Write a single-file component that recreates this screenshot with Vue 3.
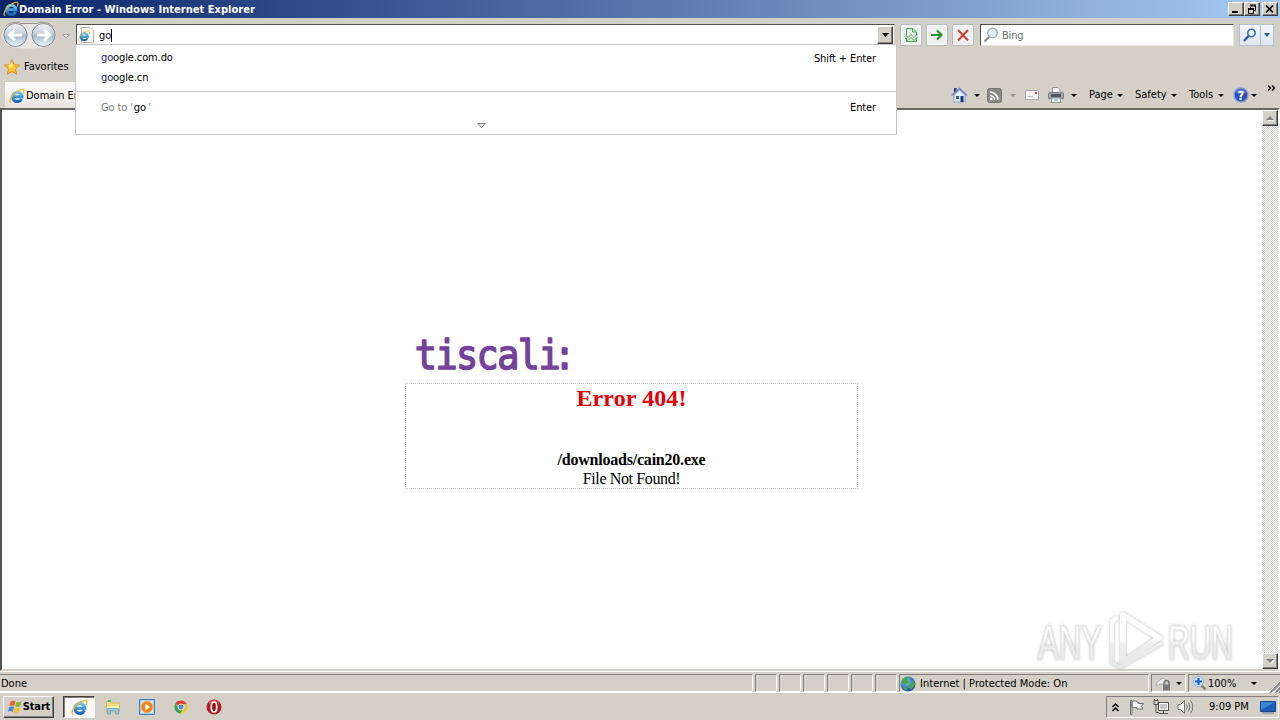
<script setup>
import { ref } from 'vue';

const address = ref('go');

const suggestions = ref([
  { id: 1, match: 'go', rest: 'ogle.com.do', hint: 'Shift + Enter' },
  { id: 2, match: 'go', rest: 'ogle.cn', hint: '' },
]);

const menus = ref(['Page', 'Safety', 'Tools']);
</script>

<template>
  <div class="screen">
    <!-- shared icons -->
    <svg class="defs" width="0" height="0">
      <defs>
        <linearGradient id="ieBlue" x1="0" y1="0" x2="0" y2="1">
          <stop offset="0" stop-color="#6cc8f4" />
          <stop offset="1" stop-color="#1565b8" />
        </linearGradient>
        <linearGradient id="navFill" x1="0" y1="0" x2="0" y2="1">
          <stop offset="0" stop-color="#f4f6f8" />
          <stop offset="0.48" stop-color="#c3ccd6" />
          <stop offset="0.55" stop-color="#a9bccd" />
          <stop offset="1" stop-color="#eefaff" />
        </linearGradient>
        <radialGradient id="globeFill" cx="0.4" cy="0.35" r="0.7">
          <stop offset="0" stop-color="#7fd0f5" />
          <stop offset="1" stop-color="#0d3f96" />
        </radialGradient>
        <linearGradient id="markFill" gradientUnits="userSpaceOnUse" x1="0" y1="8" x2="0" y2="64">
          <stop offset="0.5" stop-color="#fff" />
          <stop offset="0.62" stop-color="#ededed" />
          <stop offset="1" stop-color="#e8e8e8" />
        </linearGradient>
        <symbol id="ie" viewBox="0 0 16 16">
          <path d="M12.600 10.800A4.700 4.700 0 1 1 13 8.700H4.200" fill="none" stroke="url(#ieBlue)" stroke-width="3" />
          <path d="M2.200 14.600C-.6 13.500 2 8.400 6.200 4.800C10 1.600 14.400 .2 15 2.200C15.300 3.200 14.700 4.500 14 5.500" fill="none" stroke="#efb52a" stroke-width="1.200" />
        </symbol>
      </defs>
    </svg>

    <div class="title-bar">
      <svg class="ie-title" width="16" height="16"><use href="#ie" /></svg>
      <span class="title">Domain Error - Windows Internet Explorer</span>
      <div class="win-buttons">
        <button><svg width="12" height="10"><path d="M2 8h6" stroke="#000" stroke-width="2" /></svg></button>
        <button class="restore"><svg width="12" height="10"><path d="M4 1h6M4 2h6M4.500 3v1M9.500 2v4.500H8M2 4.500h6M2 5.500h6M2.500 5v4.500h5V5" fill="none" stroke="#000" /></svg></button>
        <button><svg width="12" height="10"><path d="M2 1.500l7 7M9 1.500l-7 7" stroke="#000" stroke-width="1.700" /></svg></button>
      </div>
    </div>

    <div class="nav-bar">
      <svg class="nav-arrows" width="74" height="32" viewBox="0 0 74 32">
        <path d="M15 4.500H43A12 12 0 0 1 43 29.500C37 31 21 31 15 29.500A12 12 0 0 1 15 4.500Z" fill="#e7e6e5" />
        <path d="M6 8C12 3 18 4 21 5.500H37C42 3 49 4 53 9" fill="none" stroke="#96928e" />
        <g stroke="#7d8792">
          <circle cx="15.500" cy="17" r="11.500" fill="url(#navFill)" />
          <circle cx="43.500" cy="17" r="11.500" fill="url(#navFill)" />
        </g>
        <path d="M22 17H10M15 11.500L9.500 17L15 22.500" fill="none" stroke="#fff" stroke-width="3" />
        <path d="M37 17H49M44 11.500L49.500 17L44 22.500" fill="none" stroke="#fff" stroke-width="3" />
        <path d="M62.500 16.500h7l-3.500 3.500z" fill="#e4e0da" stroke="#aaa59e" />
      </svg>
      <div class="address">
        <svg width="16" height="16" viewBox="0 0 16 16">
          <path d="M3.500 .5H12L15.500 4V15.500H3.500Z" fill="#fffef7" stroke="#b7b5a8" />
          <use href="#ie" x="0" y="3" width="12" height="12" />
        </svg>
        <span class="typed">{{ address }}</span>
        <span class="caret"></span>
        <button class="drop"><svg width="7" height="4"><path d="M0 0h7L3.500 4z" /></svg></button>
      </div>
      <div class="tool-buttons">
        <button>
          <svg width="16" height="16" viewBox="0 0 16 16" fill="none" stroke="#3fa545">
            <path d="M3.500 8V1.500H10L13.500 5V8M9.500 1.500V5H13M3.500 11V14.500H13.500V11" />
            <path d="M2 7.500L5 10.500L8 7.500L11 10.500L14.500 7M2 11L5 13.500L8 10.500L11 13.500L14.500 10" />
          </svg>
        </button>
        <button>
          <svg width="16" height="16" viewBox="0 0 16 16"><path d="M2 8H12M8 3.500L12.500 8L8 12.500" fill="none" stroke="#25942c" stroke-width="2.200" /></svg>
        </button>
        <button>
          <svg width="16" height="16" viewBox="0 0 16 16"><path d="M3 3L13 13.500M13 3L3 13.500" stroke="#cf3f3b" stroke-width="2" /></svg>
        </button>
      </div>
      <div class="search">
        <svg width="16" height="16" viewBox="0 0 16 16">
          <path d="M1.500 14.500L6 10" stroke="#8b8b8b" stroke-width="2.200" />
          <circle cx="9.500" cy="6" r="4.800" fill="#dceefa" stroke="#9aa5b0" stroke-width="1.300" />
        </svg>
        <span>Bing</span>
      </div>
      <div class="search-go">
        <span class="go"><svg width="14" height="14" viewBox="0 0 14 14"><path d="M1 13L5.500 8" stroke="#2257b4" stroke-width="2.200" /><circle cx="8.500" cy="5" r="3.700" fill="#eff7ff" stroke="#2f6bc8" stroke-width="1.600" /></svg></span>
        <span class="more"><svg width="6" height="4"><path d="M0 0h6L3 4z" fill="#24589f" /></svg></span>
      </div>
    </div>

    <div class="fav-bar">
      <svg width="16" height="16" viewBox="0 0 16 16">
        <path d="M8 .7L10.200 5.700L15.500 6.200L11.500 9.800L12.700 15.200L8 12.400L3.300 15.200L4.500 9.800L.5 6.200L5.800 5.700Z" fill="#fec534" stroke="#dd8a16" />
        <path d="M8 3L9.300 6.600L7 9L4 7Z" fill="#ffe88c" />
      </svg>
      <span>Favorites</span>
    </div>

    <div class="command-bar">
      <div class="tab">
        <svg width="16" height="16"><use href="#ie" /></svg>
        <span>Domain Er</span>
      </div>
      <div class="commands">
        <svg class="home" width="16" height="16" viewBox="0 0 16 16">
          <path d="M3 1h2.500v5H3z" fill="#2c3790" />
          <path d="M3 8L8.500 3L14 8V15H3Z" fill="#e4effc" stroke="#8aa0c8" />
          <path d="M.7 8.500L8.500 1.500L15.700 8.500" fill="none" stroke="#6f86bd" stroke-width="1.500" />
          <path d="M5 9h3v3H5z" fill="#31649c" /><path d="M9.500 9h3v6h-3z" fill="#1d3479" />
        </svg>
        <i class="arrow"></i>
        <svg class="rss" width="15" height="15" viewBox="0 0 15 15">
          <rect x=".5" y=".5" width="14" height="14" rx="2" fill="#8b8986" stroke="#787572" />
          <path d="M3 4A8 8 0 0 1 11 12M3 7.500A4.500 4.500 0 0 1 7.500 12" fill="none" stroke="#fff" stroke-width="1.600" />
          <circle cx="4.200" cy="10.900" r="1.300" fill="#fff" />
        </svg>
        <i class="arrow dim"></i>
        <svg class="mail" width="14" height="10" viewBox="0 0 14 10"><path d="M.5 .5h13v9H.5z" fill="#f8f7fa" stroke="#aaa5ad" /><path d="M10 2h2v2h-2z" fill="#d33b45" /><path d="M3 6.500h5" stroke="#b9b5bd" /></svg>
        <svg class="printer" width="16" height="16" viewBox="0 0 16 16">
          <path d="M4.500 6V.5H10L12 2.500V6" fill="#fff" stroke="#8a929c" />
          <path d="M1.500 5.500h13q1 0 1 1v5H.5v-5q0-1 1-1z" fill="#a3a5a8" stroke="#7b7e82" />
          <path d="M3 7h10v3H3z" fill="#515459" />
          <path d="M4 11h8l1 4.500H3z" fill="#f5faff" stroke="#8a929c" />
          <path d="M6 13h4" stroke="#4d90c8" />
        </svg>
        <i class="arrow"></i>
        <span v-for="menu in menus" :key="menu" class="menu" :class="'menu-' + menu.toLowerCase()">{{ menu }}<i class="arrow"></i></span>
        <svg class="help" width="16" height="16" viewBox="0 0 16 16">
          <circle cx="8" cy="8" r="7" fill="#2c52b8" stroke="#8b9cc7" stroke-width="1.500" />
          <path d="M3 5Q8 0 13 5Q8 8 3 5" fill="#6f92dc" />
          <text x="8" y="12.500" text-anchor="middle" fill="#fff" font-size="12" font-weight="bold">?</text>
        </svg>
        <i class="arrow"></i>
        <svg class="chevrons" width="9" height="6" viewBox="0 0 9 6"><path d="M1 .5L3.500 3L1 5.500M5 .5L7.500 3L5 5.500" fill="none" stroke="#000" stroke-width="1.300" /></svg>
      </div>
    </div>

    <div class="viewport">
      <div class="page">
        <div class="message">
          <svg class="logo" width="190" height="46" viewBox="0 0 190 46">
            <text x="6.500" y="38" transform="scale(0.9 1)">tiscali<tspan dx="-6">:</tspan></text>
          </svg>
          <div class="error-box">
            <h2>Error 404!</h2>
            <b>/downloads/cain20.exe</b>
            <span>File Not Found!</span>
          </div>
        </div>
        <svg class="watermark" width="216" height="76" viewBox="0 0 216 76">
          <g class="mark">
            <text x="4" y="57" textLength="64" lengthAdjust="spacingAndGlyphs">ANY</text>
            <text x="134" y="57" textLength="65" lengthAdjust="spacingAndGlyphs">RUN</text>
            <path class="ring" d="M89 13L125 36L89 60Z" />
            <path class="bar" d="M84 15L78 19V61L86 65L128 41" />
          </g>
        </svg>
      </div>
      <div class="scrollbar">
        <button><svg width="8" height="5"><path d="M1 5h8L5 1z" fill="#fff" /><path d="M0 4h8L4 0z" fill="#808080" /></svg></button>
        <button><svg width="8" height="5"><path d="M1 1h8L5 5z" fill="#fff" /><path d="M0 0h8L4 4z" fill="#808080" /></svg></button>
      </div>
    </div>

    <div class="status-bar">
      <div class="panel done">Done</div>
      <div v-for="n in 6" :key="n" class="panel small"></div>
      <div class="panel zone">
        <svg width="16" height="16" viewBox="0 0 16 16">
          <circle cx="8" cy="8" r="7.500" fill="url(#globeFill)" />
          <path d="M2 4Q5 0 9 1L7 4L9 6L5 9L3 8ZM10 7L14 5L15 9L11 14L9 11ZM3 11L7 12L6 15Z" fill="#4ca64b" />
        </svg>
        <span>Internet | Protected Mode: On</span>
      </div>
      <div class="panel lock">
        <svg width="17" height="16" viewBox="0 0 17 16">
          <path d="M1 10C1 5 6 4 8 2C10 4 12 5 10 8L5 8Z" fill="#eee" stroke="#aaa" />
          <path d="M9 9V7A2.500 2.500 0 0 1 14 7V9" fill="none" stroke="#777" stroke-width="1.400" />
          <path d="M8 8.500h7v6H8z" fill="#77777b" />
        </svg>
        <i class="arrow"></i>
      </div>
      <div class="panel zoom">
        <svg width="14" height="15" viewBox="0 0 14 15">
          <path d="M8 9L12.500 13.500" stroke="#8d8277" stroke-width="2.500" />
          <circle cx="5.500" cy="5.500" r="5" fill="#d0e6fb" stroke="#8fb3dc" />
          <path d="M5.500 2V9M2 5.500H9" stroke="#1e62c8" stroke-width="2.200" />
        </svg>
        <span>100%</span>
        <i class="arrow"></i>
        <svg class="grip" width="13" height="13" viewBox="0 0 13 13"><path d="M1 13L13 1M6 13L13 6M10 13L13 10" stroke="#808080" stroke-width="1.600" /><path d="M0 12L12 0M5 12L13 4" stroke="#fff" /></svg>
      </div>
    </div>

    <div class="taskbar">
      <button class="start">
        <svg width="16" height="16" viewBox="0 0 17 16">
          <path d="M4 2Q6.500 .5 9 2L7.700 7Q5 5.700 2.600 7Z" fill="#e8602c" />
          <path d="M10 2.300Q13 3.600 15.500 2L14 7.200Q11 8.500 8.700 7.400Z" fill="#7fb83c" />
          <path d="M2.300 8Q5 6.700 7.400 8L6 13Q3.500 11.700 1 13Z" fill="#3f86d2" />
          <path d="M8.400 8.400Q11 9.700 13.700 8.300L12.300 13.300Q9.500 14.700 7 13.400Z" fill="#f6bd28" />
        </svg>
        <span>Start</span>
      </button>
      <div class="task-ie"><svg width="17" height="17"><use href="#ie" /></svg></div>
      <div class="quick">
        <svg width="16" height="16" viewBox="0 0 16 16">
          <path d="M1.500 2.500H6L7 4H14.500V13H1.500Z" fill="#f5dc82" stroke="#d9b75a" />
          <path d="M3 1h3v2H3z" fill="#5bb36a" />
          <path d="M2 7h12v2H2z" fill="#fff2bd" />
          <path d="M2.500 15V9.500h11V15h-3v-3h-5v3z" fill="#8fc8e8" stroke="#5b9fc8" stroke-width=".7" />
        </svg>
        <svg width="16" height="16" viewBox="0 0 16 16">
          <path d="M.5 .5h15v15H.5z" fill="#a6cbea" stroke="#4581bb" />
          <path d="M2 2h12v12H2z" fill="#d5e8f7" />
          <circle cx="8" cy="8" r="5.800" fill="#f08418" stroke="#f8b05c" />
          <path d="M6.300 4.500L11 8L6.300 11.500Z" fill="#fff" />
        </svg>
        <svg width="14" height="14" viewBox="0 0 14 14">
          <circle cx="7" cy="7" r="6.500" fill="#f3c42c" />
          <path d="M7 7L1.300 3.800A6.500 6.500 0 0 1 12.700 4H7Z" fill="#dc4132" />
          <path d="M1.300 3.800A6.500 6.500 0 0 0 6.500 13.500L9 8.500L5 8.500Z" fill="#37a156" />
          <circle cx="7" cy="7" r="3" fill="#4b88e0" stroke="#fff" stroke-width=".9" />
        </svg>
        <svg width="16" height="16" viewBox="0 0 16 16">
          <circle cx="8" cy="8" r="7.500" fill="#b71a20" />
          <path d="M2 4Q8-2 14 4Q8 6 2 4" fill="#d94e4e" />
          <ellipse cx="8" cy="8" rx="2.700" ry="5" fill="#8c0c12" stroke="#fff" stroke-width="1.700" />
        </svg>
      </div>
      <div class="tray">
        <svg class="expand" width="7" height="9" viewBox="0 0 7 9"><path d="M.5 4L3.500 1L6.500 4M.5 8L3.500 5L6.500 8" fill="none" stroke="#000" stroke-width="1.400" /></svg>
        <svg class="flag" width="16" height="16" viewBox="0 0 16 16"><path d="M1.500 15.500V1.500H3V15.500ZM3 2.500Q6 1 9 3V4.500H14.500L12.500 7.500L14 10H8V9Q5.500 7.500 3 9Z" fill="#fff" stroke="#6d6d6d" /></svg>
        <svg class="network" width="16" height="16" viewBox="0 0 16 16"><path d="M5.500 3.500H15.500V11.500H5.500Z" fill="#c8c8c8" stroke="#555" /><path d="M10.500 12V14M6 14.500H15M1 1.500H5V5.500H1ZM3 5.500V13.500H6M1.500 0V2M4.500 0V2" fill="none" stroke="#555" /><path d="M6.500 4.500h8v6h-8z" fill="none" stroke="#fff" /></svg>
        <svg class="volume" width="17" height="16" viewBox="0 0 17 16"><path d="M1 5.500H3.500L7.500 1.500V14.500L3.500 10.500H1Z" fill="#fff" stroke="#777" /><path d="M9.500 5.500Q11 8 9.500 10.500M11.500 3.500Q14.300 8 11.500 12.500M13.500 1.500Q18 8 13.500 14.500" fill="none" stroke="#777" /></svg>
        <span class="clock">9:09 PM</span>
        <svg class="desktop" width="16" height="13" viewBox="0 0 16 13"><path d="M.5 .5h15v10H.5z" fill="#1c5db9" stroke="#194684" /><path d="M1 1h14L1 9z" fill="#3d83d7" /><path d="M2 12h12" stroke="#5c7494" /></svg>
      </div>
    </div>

    <!-- address bar suggestions, opened over the page -->
    <div class="suggest">
      <div v-for="item in suggestions" :key="item.id" class="suggest-row">
        <span><em>{{ item.match }}</em>{{ item.rest }}</span>
        <span class="hint">{{ item.hint }}</span>
      </div>
      <div class="suggest-row goto">
        <span class="muted">Go to '<b>{{ address }}</b>'</span>
        <span class="enter">Enter</span>
      </div>
      <svg class="expander" width="9" height="6"><path d="M.8 .5h7.400L4.500 4.500z" fill="#eee" stroke="#888" /></svg>
    </div>
  </div>
</template>

<style>
body {
  margin: 0;
  overflow: hidden;
}
</style>

<style scoped>
.screen {
  position: relative;
  display: flex;
  flex-direction: column;
  width: 1280px;
  height: 720px;
  background: #d4d0c8;
  color: #000;
  font-family: Tahoma, "DejaVu Sans Condensed", "DejaVu Sans", sans-serif;
  font-stretch: condensed;
  font-size: 11px;
  letter-spacing: 0;
  line-height: 14px;
  white-space: nowrap;
  overflow: hidden;
}

.screen * {
  box-sizing: border-box;
}

svg {
  display: block;
  flex: none;
}

.defs {
  position: absolute;
}

button {
  display: flex;
  align-items: center;
  justify-content: center;
  padding: 0;
  background: #d4d0c8;
  border: 1px solid;
  border-color: #fff #404040 #404040 #fff;
  box-shadow: inset -1px -1px #808080;
  font: inherit;
  letter-spacing: inherit;
}

.arrow {
  display: inline-block;
  flex: none;
  border: 3px solid transparent;
  border-top-color: #000;
  border-bottom: 0;
}

.arrow.dim {
  border-top-color: #96928d;
}

/* title bar */
.title-bar {
  display: flex;
  align-items: center;
  height: 18px;
  padding: 0 2px 0 3px;
  background: linear-gradient(to right, #0a246a, #a6caf0);
}

.title {
  flex: 1;
  padding-top: 1px;
  color: #fff;
  font-weight: bold;
  letter-spacing: 0.03px;
}

.win-buttons {
  display: flex;
}

.win-buttons button {
  width: 16px;
  height: 14px;
}

.win-buttons .restore {
  margin-right: 2px;
}

/* address row */
.nav-bar {
  display: flex;
  height: 33px;
}

.nav-arrows {
  margin: 0 2px 0 0;
}

.address {
  display: flex;
  align-items: center;
  width: 819px;
  height: 22px;
  margin-top: 6px;
  padding-left: 1px;
  background: #fff;
  border: 1px solid;
  border-color: #55524e #d4d0c8 #d4d0c8 #55524e;
}

.typed {
  margin-left: 5px;
  padding-top: 2px;
}

.caret {
  width: 1px;
  height: 13px;
  background: #000;
}

.drop {
  width: 16px;
  height: 18px;
  margin: 0 1px 0 auto;
}

.tool-buttons {
  display: flex;
  gap: 4px;
  margin: 6px 0 0 5px;
}

.tool-buttons button {
  width: 22px;
  height: 22px;
  background: #eff0f0;
  border: 1px solid #b5bac0;
  border-radius: 2px;
  box-shadow: inset 0 0 0 1px #fafbfc;
}

.search {
  display: flex;
  align-items: center;
  width: 254px;
  height: 22px;
  margin: 6px 0 0 6px;
  padding-left: 2px;
  background: #fff;
  border: 1px solid;
  border-color: #55524e #e8e5e0 #e8e5e0 #55524e;
  color: #6d6d6d;
}

.search span {
  margin: 2px 0 0 3px;
  letter-spacing: -0.2px;
}

.search-go {
  display: flex;
  width: 35px;
  height: 22px;
  margin: 6px 0 0 5px;
  background: linear-gradient(#f4f7fc, #dde5f0);
  border: 1px solid #b5bfd0;
}

.search-go span {
  display: flex;
  align-items: center;
  justify-content: center;
}

.go {
  width: 21px;
  border-right: 1px solid #b5bfd0;
}

.more {
  width: 12px;
}

/* favorites */
.fav-bar {
  display: flex;
  align-items: center;
  gap: 4px;
  height: 31px;
  padding-left: 4px;
}

/* tabs and commands */
.command-bar {
  display: flex;
  height: 26px;
}

.tab {
  display: flex;
  align-items: center;
  gap: 1px;
  width: 160px;
  padding: 2px 0 0 4px;
  margin-left: 5px;
  background: linear-gradient(#fdfcfb, #e6e3de);
}

.commands {
  display: flex;
  align-items: center;
  flex: 1;
  padding-left: 786px;
}

.home {
  margin-right: 7px;
}

.rss {
  margin: 0 8px 0 7px;
}

.mail {
  margin: 0 9px 0 9px;
}

.printer {
  margin-right: 7px;
}

.menu {
  display: flex;
  align-items: center;
  justify-content: space-between;
}

.menu-page {
  width: 34px;
  margin-left: 12px;
}

.menu-safety {
  width: 42px;
  margin-left: 12px;
}

.menu-tools {
  width: 35px;
  margin-left: 12px;
}

.help {
  margin: 0 2px 0 9px;
}

.chevrons {
  margin: -14px 0 0 10px;
}

/* page */
.viewport {
  display: flex;
  height: 563px;
  border: 2px solid;
  border-color: #6a6762 #fff #d4d0c8 #55524e;
}

.page {
  position: relative;
  flex: 1;
  background: #fff;
}

.message {
  width: 453px;
  margin: 221px 0 0 403px;
}

.logo {
  margin-left: 4px;
}

.logo text {
  fill: #74419b;
  stroke: #74419b;
  stroke-width: 1.5px;
  stroke-linejoin: round;
  font-family: "DejaVu Sans Mono", monospace;
  font-size: 41px;
  font-stretch: normal;
  letter-spacing: -1.8px;
}

.error-box {
  display: flex;
  flex-direction: column;
  align-items: center;
  height: 106px;
  margin-top: 6px;
  border: 1px dotted #c4c4c4;
  font-family: "Liberation Serif", serif;
  font-size: 16px;
  letter-spacing: -0.38px;
  line-height: 19px;
}

.error-box h2 {
  height: 19px;
  margin: 0 0 47px;
  padding-top: 5px;
  color: #e80008;
  font-size: 24px;
  letter-spacing: 0.1px;
  line-height: 19px;
}

.error-box b {
  letter-spacing: -0.22px;
}

.watermark {
  position: absolute;
  right: 12px;
  bottom: -9px;
}

.mark {
  fill: url(#markFill);
  stroke: #e8e8e8;
  stroke-width: 0.8px;
  stroke-linejoin: round;
  font-family: "Liberation Sans", sans-serif;
  font-size: 49px;
  letter-spacing: 0;
  filter: drop-shadow(0 0 1.5px #bbb);
}

.ring {
  fill: none;
  stroke: url(#markFill);
  stroke-width: 6px;
}

.bar {
  fill: none;
  stroke: url(#markFill);
  stroke-width: 4px;
}

.scrollbar {
  display: flex;
  flex-direction: column;
  justify-content: space-between;
  width: 16px;
  background: repeating-conic-gradient(#fff 0 25%, #d4d0c8 0 50%) 0 0 / 2px 2px;
}

.scrollbar button {
  width: 16px;
  height: 16px;
}

/* status bar */
.status-bar {
  display: flex;
  gap: 2px;
  height: 22px;
  padding-top: 2px;
  border-top: 1px solid #fff;
  border-bottom: 1px solid #fff;
}

.panel {
  display: flex;
  flex: none;
  align-items: center;
  height: 18px;
  padding-top: 1px;
  border: 1px solid;
  border-color: #808080 #fff #fff #808080;
}

.done {
  width: 753px;
  border-left: 0;
  padding-left: 1px;
}

.small {
  width: 22px;
}

.zone {
  width: 250px;
  gap: 4px;
  letter-spacing: 0.02px;
}

.lock {
  width: 35px;
  gap: 4px;
  padding-left: 3px;
}

.zoom {
  flex: 1;
  padding-left: 4px;
}

.zoom span {
  width: 43px;
  margin-left: 1px;
}

.grip {
  margin: 5px 0 0 12px;
}

/* taskbar */
.taskbar {
  display: flex;
  align-items: center;
  height: 27px;
  padding: 1px 1px 0 3px;
}

.start {
  width: 51px;
  height: 22px;
  font-weight: bold;
  letter-spacing: -0.15px;
}

.task-ie {
  display: flex;
  align-items: center;
  justify-content: center;
  width: 32px;
  height: 22px;
  margin-left: 9px;
  background: #fbfaf9;
  border: 1px solid;
  border-color: #404040 #fff #fff #404040;
  box-shadow: inset 1px 1px #808080;
}

.quick {
  display: flex;
  align-items: center;
  gap: 18.3px;
  margin-left: 10px;
}

.tray {
  display: flex;
  align-items: center;
  width: 173px;
  height: 22px;
  margin-left: auto;
  padding-left: 5px;
  border: 1px solid;
  border-color: #808080 #fff #fff #808080;
}

.flag {
  margin-left: 10px;
}

.network {
  margin-left: 8px;
}

.volume {
  margin-left: 8px;
}

.clock {
  width: 40px;
  margin: 0 11px 0 15px;
}

/* suggestions */
.suggest {
  position: absolute;
  top: 44px;
  left: 75px;
  width: 822px;
  height: 91px;
  padding-top: 3px;
  background: #fff;
  border: 1px solid #c5c5c5;
  letter-spacing: -0.12px;
}

.suggest-row {
  display: flex;
  align-items: center;
  justify-content: space-between;
  height: 20px;
  padding: 0 20px 0 25px;
}

.suggest-row em {
  color: #14145c;
  font-style: normal;
}

.hint {
  padding-top: 1px;
}

.goto {
  height: 30px;
  margin-top: 3px;
  padding-top: 2px;
  border-top: 1px solid #c5c5c5;
}

.muted {
  color: #777;
}

.muted b {
  margin: 0 2px 0 1px;
  color: #000;
  font-weight: normal;
}

.expander {
  margin: 2px 0 0 401px;
}
</style>
